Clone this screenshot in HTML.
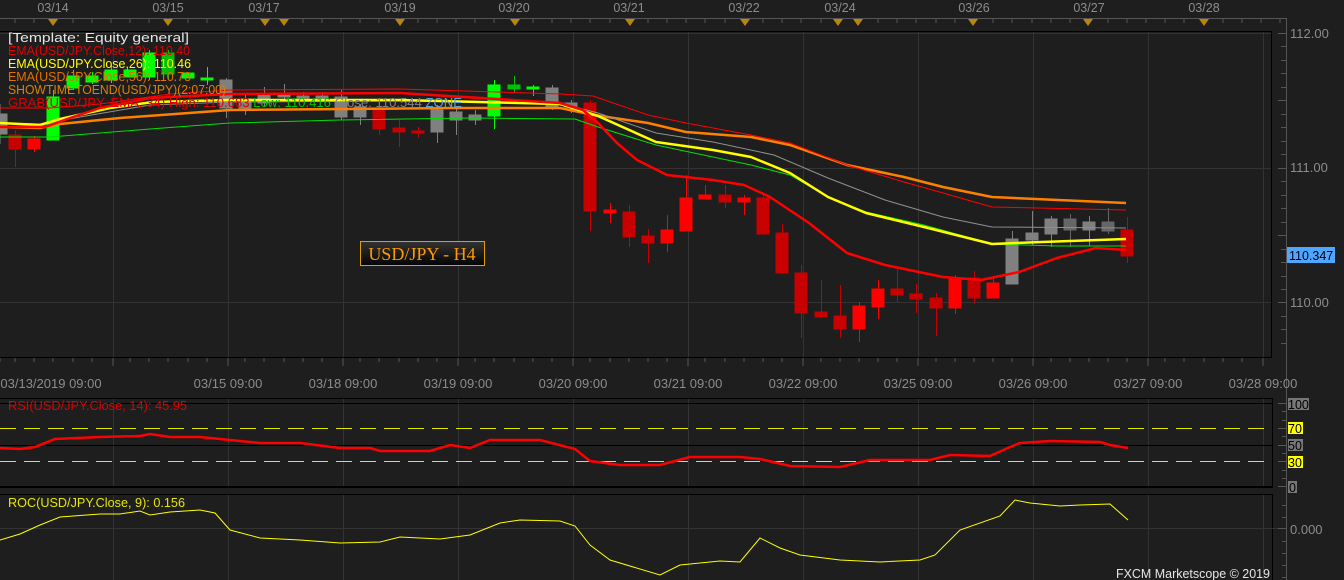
<!DOCTYPE html>
<html><head><meta charset="utf-8"><style>
html,body{margin:0;padding:0;background:#1e1e1e;}
svg{display:block;font-family:"Liberation Sans","DejaVu Sans",sans-serif;}
</style></head><body>
<svg width="1344" height="580" viewBox="0 0 1344 580" xmlns="http://www.w3.org/2000/svg">
<rect width="1344" height="580" fill="#1e1e1e"/>
<!-- top axis -->
<g fill="#8c8c8c" font-size="12.5" text-anchor="middle">
<text x="53" y="12">03/14</text><text x="168" y="12">03/15</text><text x="264" y="12">03/17</text>
<text x="400" y="12">03/19</text><text x="514" y="12">03/20</text><text x="629" y="12">03/21</text>
<text x="744" y="12">03/22</text><text x="840" y="12">03/24</text><text x="974" y="12">03/26</text>
<text x="1089" y="12">03/27</text><text x="1204" y="12">03/28</text>
</g>
<line x1="0" y1="18.5" x2="1286" y2="18.5" stroke="#555"/>
<g stroke="#555">
<path d="M15 19v4M34 19v4M73 19v4M92 19v4M111 19v4M130 19v4M149 19v4M188 19v4M207 19v4M226 19v4M245 19v4M303 19v4M322 19v4M341 19v4M360 19v4M379 19v4M418 19v4M437 19v4M456 19v4M475 19v4M494 19v4M533 19v4M552 19v4M571 19v4M590 19v4M610 19v4M648 19v4M667 19v4M686 19v4M705 19v4M725 19v4M763 19v4M782 19v4M801 19v4M821 19v4M878 19v4M897 19v4M916 19v4M936 19v4M955 19v4M993 19v4M1012 19v4M1032 19v4M1051 19v4M1070 19v4M1108 19v4M1127 19v4M1146 19v4M1165 19v4M1184 19v4M1223 19v4M1242 19v4M1261 19v4M1280 19v4"/>
</g>
<g fill="#b8860b">
<path d="M48 19h10l-5 7z"/><path d="M163 19h10l-5 7z"/><path d="M260 19h10l-5 7z"/><path d="M279 19h10l-5 7z"/>
<path d="M395 19h10l-5 7z"/><path d="M510 19h10l-5 7z"/><path d="M625 19h10l-5 7z"/><path d="M740 19h10l-5 7z"/>
<path d="M833 19h10l-5 7z"/><path d="M853 19h10l-5 7z"/><path d="M968 19h10l-5 7z"/><path d="M1083 19h10l-5 7z"/><path d="M1199 19h10l-5 7z"/>
</g>
<line x1="1286.5" y1="18" x2="1286.5" y2="580" stroke="#555"/>
<!-- main chart grid -->
<g stroke="#333">
<path d="M0 33.5H1271M0 168.5H1271M0 302.5H1271"/>
<path d="M113.5 31V357M228.5 31V357M343.5 31V357M458.5 31V357M573.5 31V357M688.5 31V357M803.5 31V357M918.5 31V357M1033.5 31V357M1148.5 31V357M1263.5 31V357"/>
</g>
<path d="M0 31.5H1271.5V357.5H0" fill="none" stroke="#000"/>
<!-- right axis -->
<g stroke="#555"><path d="M1278 33.5h8M1281 46.5h5M1281 60.5h5M1281 73.5h5M1281 87.5h5M1278 100.5h8M1281 114.5h5M1281 127.5h5M1281 141.5h5M1281 154.5h5M1278 168.5h8M1281 181.5h5M1281 195.5h5M1281 208.5h5M1281 222.5h5M1278 235.5h8M1281 249.5h5M1281 262.5h5M1281 276.5h5M1281 289.5h5M1278 302.5h8M1281 316.5h5M1281 329.5h5M1281 343.5h5"/></g>
<g fill="#8c8c8c" font-size="13"><text x="1290" y="38">112.00</text><text x="1290" y="172">111.00</text><text x="1290" y="307">110.00</text></g>
<rect x="1287" y="247" width="48" height="16" fill="#4da6ff"/>
<text x="1289" y="260" font-size="12.5" fill="#000">110.347</text>
<!-- bottom axis -->
<g stroke="#555"><path d="M0 358v4M15 358v4M34 358v4M53 358v4M73 358v4M92 358v4M113 358v8M130 358v4M149 358v4M168 358v4M188 358v4M207 358v4M228 358v8M245 358v4M264 358v4M284 358v4M303 358v4M322 358v4M343 358v8M360 358v4M379 358v4M399 358v4M418 358v4M437 358v4M458 358v8M475 358v4M494 358v4M514 358v4M533 358v4M552 358v4M573 358v8M590 358v4M610 358v4M629 358v4M648 358v4M667 358v4M688 358v8M705 358v4M725 358v4M744 358v4M763 358v4M782 358v4M803 358v8M821 358v4M840 358v4M859 358v4M878 358v4M897 358v4M918 358v8M936 358v4M955 358v4M974 358v4M993 358v4M1012 358v4M1033 358v8M1051 358v4M1070 358v4M1089 358v4M1108 358v4M1127 358v4M1148 358v8M1165 358v4M1184 358v4M1204 358v4M1223 358v4M1242 358v4M1263 358v8"/></g>
<g fill="#8c8c8c" font-size="13" text-anchor="middle">
<text x="51" y="388">03/13/2019 09:00</text><text x="228" y="388">03/15 09:00</text><text x="343" y="388">03/18 09:00</text>
<text x="458" y="388">03/19 09:00</text><text x="573" y="388">03/20 09:00</text><text x="688" y="388">03/21 09:00</text>
<text x="803" y="388">03/22 09:00</text><text x="918" y="388">03/25 09:00</text><text x="1033" y="388">03/26 09:00</text>
<text x="1148" y="388">03/27 09:00</text><text x="1263" y="388">03/28 09:00</text>
</g>
<!-- candles -->
<g stroke-width="1">
<g stroke="#c80000" fill="#c80000">
<path d="M15.5 130v37M379.5 105v30M399.5 120v27M418.5 127v11M590.5 100v131M629.5 205v42M648.5 229v34M725.5 185v23M763.5 195v40M782.5 224v40M801.5 265v73M821.5 280v37M840.5 285v53M897.5 270v32M916.5 284v29M936.5 293v43M974.5 271v33M1127.5 217v46"/>
<rect x="9" y="135" width="12" height="14"/><rect x="373" y="110" width="12" height="19"/><rect x="393" y="128" width="12" height="4"/><rect x="412" y="131" width="12" height="2"/>
<rect x="584" y="103" width="12" height="108"/><rect x="623" y="212" width="12" height="25"/><rect x="642" y="236" width="12" height="7"/><rect x="719" y="195" width="12" height="7"/>
<rect x="757" y="198" width="12" height="36"/><rect x="776" y="233" width="12" height="40"/><rect x="795" y="273" width="12" height="40"/><rect x="815" y="312" width="12" height="5"/>
<rect x="834" y="316" width="12" height="13"/><rect x="891" y="289" width="12" height="6"/><rect x="910" y="294" width="12" height="5"/><rect x="930" y="298" width="12" height="10"/>
<rect x="968" y="278" width="12" height="20"/><rect x="1121" y="230" width="12" height="26"/>
</g>
<g stroke="#ff0000" fill="#ff0000">
<path d="M34.5 136v16M610.5 203v20M667.5 215v37M686.5 175v56M705.5 185v14M744.5 195v20M859.5 302v40M878.5 280v39M955.5 275v39M993.5 277v21"/>
<rect x="28" y="139" width="12" height="10"/><rect x="604" y="210" width="12" height="3"/><rect x="661" y="230" width="12" height="13"/><rect x="680" y="198" width="12" height="33"/>
<rect x="699" y="195" width="12" height="4"/><rect x="738" y="198" width="12" height="4"/><rect x="853" y="306" width="12" height="23"/><rect x="872" y="289" width="12" height="18"/>
<rect x="949" y="278" width="12" height="30"/><rect x="987" y="283" width="12" height="15"/>
</g>
<g stroke="#00ff00" fill="#00ff00">
<path d="M53.5 90v50M73.5 70v20M92.5 72v12M111.5 65v18M149.5 50v30M494.5 80v49M533.5 85v11M207.5 67v18"/>
<rect x="47" y="97" width="12" height="43"/><rect x="67" y="76" width="12" height="12"/><rect x="86" y="76" width="12" height="6"/><rect x="105" y="70" width="12" height="10"/>
<rect x="124" y="70" width="12" height="7"/><rect x="143" y="53" width="12" height="24"/><rect x="488" y="85" width="12" height="31"/><rect x="527" y="87" width="12" height="2"/><rect x="201" y="78" width="12" height="2"/><rect x="182" y="73" width="12" height="5"/>
</g>
<g stroke="#00c000" fill="#00c000">
<path d="M168.5 50v30M514.5 76v16"/>
<rect x="162" y="53" width="12" height="21"/><rect x="508" y="85" width="12" height="4"/>
</g>
<g stroke="#808080" fill="#808080">
<path d="M226.5 78v40M245.5 95v20M264.5 87v20M284.5 84v16M303.5 92v10M322.5 92v10M341.5 90v30M360.5 104v21M437.5 105v38M456.5 108v27M475.5 110v15M552.5 85v25M571.5 100v13M1012.5 231v53M1032.5 211v34M1051.5 216v31M1089.5 216v30M0 104v40"/>
<rect x="220" y="80" width="12" height="28"/><rect x="239" y="99" width="12" height="9"/><rect x="258" y="94" width="12" height="9"/><rect x="278" y="93" width="12" height="4"/>
<rect x="297" y="96" width="12" height="2"/><rect x="316" y="96" width="12" height="2"/><rect x="335" y="97" width="12" height="20"/><rect x="354" y="107" width="12" height="10"/>
<rect x="431" y="110" width="12" height="22"/><rect x="450" y="112" width="12" height="8"/><rect x="469" y="115" width="12" height="5"/><rect x="546" y="88" width="12" height="19"/><rect x="565" y="103" width="12" height="4"/>
<rect x="1006" y="239" width="12" height="45"/><rect x="1026" y="233" width="12" height="7"/><rect x="1045" y="219" width="12" height="15"/><rect x="1083" y="222" width="12" height="8"/><rect x="0" y="114" width="7" height="20"/>
</g>
<g stroke="#666" fill="#666">
<path d="M1070.5 214v33M1108.5 208v26"/>
<rect x="1064" y="219" width="12" height="11"/><rect x="1102" y="222" width="12" height="9"/>
</g>
</g>
<!-- moving averages -->
<g fill="none" stroke-linejoin="round">
<polyline stroke="#00e000" stroke-width="1" points="0,137 50,137 100,133 150,129 230,123 340,120 470,118 575,119 598,127 656,145 713,157 751,165 790,175 828,197 866,212 924,225 992,244 1057,246 1126,246"/>
<polyline stroke="#ff8000" stroke-width="2.5" points="0,127 40,128 60,124 120,118 230,110 350,109 450,108 560,108 594,115 648,123 686,132 751,137 790,145 847,165 904,177 943,187 992,197 1126,203"/>
<polyline stroke="#909090" stroke-width="1" points="0,123 40,124 80,117 150,105 230,102 400,101 560,103 598,113 656,133 713,142 774,155 828,178 885,200 943,217 992,227 1126,228"/>
<polyline stroke="#ffff00" stroke-width="2.5" points="0,123 40,125 60,119 110,108 153,102 230,100 400,100 560,104 598,116 656,142 713,150 751,157 790,173 828,197 866,213 924,227 992,244 1042,242 1126,239"/>
<polyline stroke="#ff0000" stroke-width="1" points="0,108 50,108 100,104 170,94 230,90 400,89 560,94 593,96 648,115 686,123 751,135 790,143 847,165 904,182 943,193 992,207 1126,210"/>
<polyline stroke="#ff0000" stroke-width="2.5" points="0,127 45,127 70,118 100,108 150,98 230,94 400,93 560,103 583,110 598,123 617,143 637,160 667,175 713,180 744,185 770,197 809,223 847,253 885,265 943,277 981,280 1019,272 1057,258 1096,248 1126,250"/>
</g>
<!-- legend -->
<g font-size="12.5">
<text x="8" y="42" fill="#e6e6e6" textLength="181" lengthAdjust="spacingAndGlyphs">[Template: Equity general]</text>
<text x="8" y="55" fill="#e00000" textLength="182" lengthAdjust="spacingAndGlyphs">EMA(USD/JPY.Close,12): 110.40</text>
<text x="8" y="68" fill="#ffff00" textLength="183" lengthAdjust="spacingAndGlyphs">EMA(USD/JPY.Close,26): 110.46</text>
<text x="8" y="81" fill="#e07000" textLength="183" lengthAdjust="spacingAndGlyphs">EMA(USD/JPY.Close,56): 110.73</text>
<text x="8" y="94" fill="#e08000" textLength="218" lengthAdjust="spacingAndGlyphs">SHOWTIMETOEND(USD/JPY)(2:07:00)</text>
<text x="8" y="107" textLength="454" lengthAdjust="spacingAndGlyphs"><tspan fill="#e00000">GRAB(USD/JPY, EMA, 34) High: 110.683 </tspan><tspan fill="#00c000">Low: 110.416 </tspan><tspan fill="#808080">Close: 110.544 </tspan><tspan fill="#5aa0e0">ZONE</tspan></text>
</g>
<defs><linearGradient id="lg" x1="0" y1="0" x2="0" y2="1"><stop offset="0" stop-color="#333"/><stop offset="1" stop-color="#050505"/></linearGradient></defs>
<rect x="360.5" y="241.5" width="124" height="24" fill="url(#lg)" stroke="#e0a000"/>
<text x="422" y="260" font-family="Liberation Serif,serif" font-size="18" fill="#ff9900" text-anchor="middle">USD/JPY - H4</text>
<!-- RSI panel -->
<path d="M0 398.5H1272.5V487.5H0" fill="none" stroke="#000"/>
<g stroke="#333"><path d="M113.5 399V487M228.5 399V487M343.5 399V487M458.5 399V487M573.5 399V487M688.5 399V487M803.5 399V487M918.5 399V487M1033.5 399V487M1148.5 399V487M1263.5 399V487"/></g>
<path d="M0 403.5H1272M0 445.5H1272M0 486.5H1272" stroke="#000"/>
<path d="M0 428.5H1266M0 461.5H1266" stroke="#e6e600" stroke-dasharray="16,8"/>
<polyline fill="none" stroke="#ff0000" stroke-width="2.5" points="0,448 20,449 35,447 55,439 100,437 140,436 150,434 170,437 200,437 230,440 260,443 300,443 340,448 370,448 380,451 430,451 450,445 470,448 490,440 540,440 575,449 590,461 620,465 660,465 690,457 740,457 760,459 790,466 840,467 870,460 930,460 950,455 990,456 1010,447 1020,443 1050,441 1100,442 1110,445 1128,448"/>
<text x="8" y="410" font-size="12.5" fill="#e00000" textLength="179" lengthAdjust="spacingAndGlyphs">RSI(USD/JPY.Close, 14): 45.95</text>
<g stroke="#555"><path d="M1278 403.5h8M1282 411.5h4M1282 420.5h4M1278 428.5h8M1282 436.5h4M1278 445.5h8M1282 453.5h4M1278 461.5h8M1282 470.5h4M1282 478.5h4M1278 486.5h8"/></g>
<g font-size="12.5"><rect x="1288" y="398" width="21" height="12" fill="#777"/><text x="1288" y="409" fill="#000">100</text>
<rect x="1288" y="422" width="15" height="12" fill="#ffff00"/><text x="1288" y="433" fill="#000">70</text>
<rect x="1288" y="439" width="15" height="12" fill="#777"/><text x="1288" y="450" fill="#000">50</text>
<rect x="1288" y="456" width="15" height="12" fill="#ffff00"/><text x="1288" y="467" fill="#000">30</text>
<rect x="1288" y="481" width="9" height="12" fill="#777"/><text x="1289" y="492" fill="#000">0</text></g>
<!-- ROC panel -->
<path d="M0 494.5H1272.5V580" fill="none" stroke="#000"/>
<g stroke="#333"><path d="M113.5 495V580M228.5 495V580M343.5 495V580M458.5 495V580M573.5 495V580M688.5 495V580M803.5 495V580M918.5 495V580M1033.5 495V580M1148.5 495V580M1263.5 495V580M0 528.5H1286"/></g>
<g stroke="#555"><path d="M1282 505.5h4M1282 517.5h4M1278 528.5h8M1282 541.5h4M1282 553.5h4M1282 565.5h4M1282 577.5h4"/></g>
<text x="1290" y="534" font-size="13" fill="#8c8c8c">0.000</text>
<polyline fill="none" stroke="#ffff00" stroke-width="1" points="0,540 20,534 40,525 60,517 100,514 120,514 140,511 150,515 170,512 200,510 215,513 230,530 260,538 300,540 340,543 380,542 400,537 440,539 470,535 500,523 520,520 560,521 575,526 590,545 610,560 660,575 680,565 720,561 740,562 760,538 780,548 800,555 840,560 880,562 920,560 935,555 960,530 1000,516 1015,500 1030,503 1060,506 1080,505 1110,504 1128,520"/>
<text x="8" y="507" font-size="12.5" fill="#e6e600" textLength="177" lengthAdjust="spacingAndGlyphs">ROC(USD/JPY.Close, 9): 0.156</text>
<text x="1116" y="578" font-size="13" fill="#e6e6e6" textLength="154" lengthAdjust="spacingAndGlyphs">FXCM Marketscope © 2019</text>
</svg>
</body></html>
